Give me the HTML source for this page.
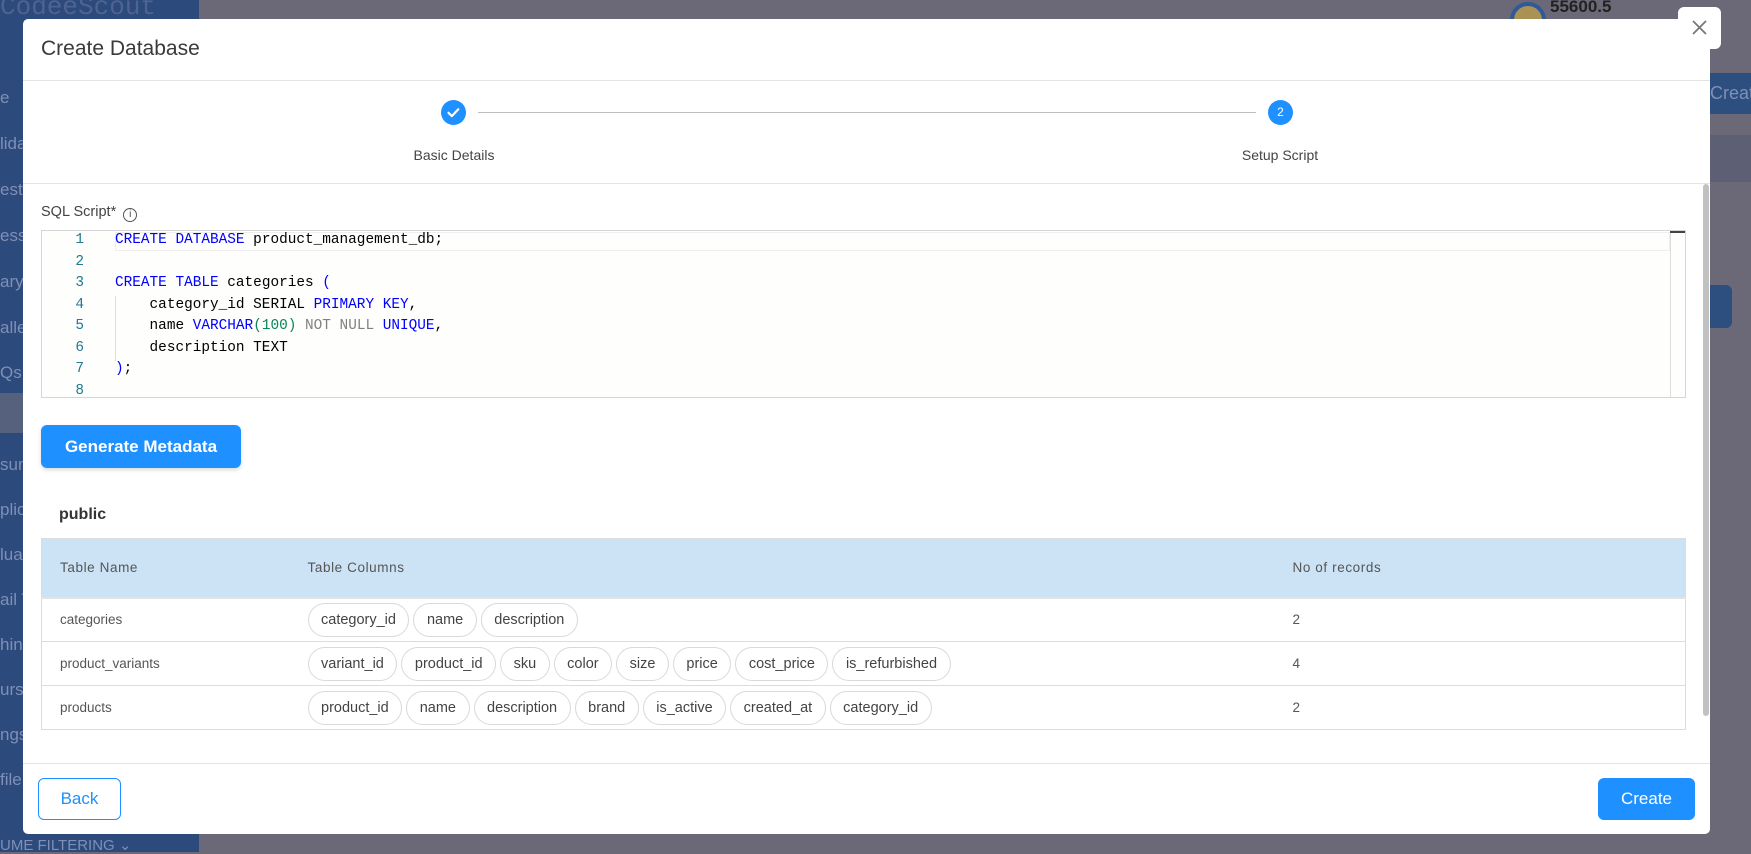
<!DOCTYPE html>
<html><head><meta charset="utf-8"><style>
*{box-sizing:border-box;margin:0;padding:0}
body{width:1751px;height:852px;overflow:hidden;background:#6b6977;font-family:"Liberation Sans",sans-serif;position:relative}
.side{position:absolute;left:0;top:0;width:199px;height:852px;background:#2c4a7b}
.sidetxt{position:absolute;left:0;color:#7f8fb5;font-size:17px}
.abs{position:absolute}
.modal{position:absolute;left:23px;top:19px;width:1687px;height:815px;background:#fff;border-radius:5px;overflow:hidden}
.hdr{position:absolute;left:0;top:0;width:100%;height:62px;border-bottom:1px solid #e3e3e3}
.hdr h1{position:absolute;left:18px;top:18px;font-size:21px;font-weight:normal;color:#3a3a3a}
.step{position:absolute;top:62px;height:103px;width:100%;border-bottom:1px solid #e3e3e3}
.circ{position:absolute;width:25px;height:25px;border-radius:50%;background:#1e90ff;color:#fff;font-size:12px;text-align:center;line-height:25px}
.lbl{position:absolute;font-size:14px;color:#444;transform:translateX(-50%);top:66px}
.code{position:absolute;left:18px;top:211px;width:1645px;height:168px;border:1px solid #d6d6d6;background:#fefefd;font-family:"Liberation Mono",monospace;font-size:14.4px}
.ln{position:absolute;left:0;width:42px;text-align:right;color:#237893}
.cl{position:absolute;left:73px;white-space:pre;color:#000}
.k{color:#0000ff}.n{color:#098658}.g{color:#808080}
.btn{position:absolute;background:#1e90ff;color:#fff;border-radius:6px;text-align:center;font-size:17px}
table{position:absolute;left:18px;top:519px;width:1645px;border-collapse:collapse;border:1px solid #dcdcdc;font-size:13.5px;color:#555}
th{background:#cce3f6;height:59px;text-align:left;font-weight:normal;letter-spacing:.6px;color:#555;border-bottom:2px solid #e3e3e3}
td{border-top:1px solid #dcdcdc;height:44px;vertical-align:middle}
th:first-child,td:first-child{padding-left:18px;width:266px}
th:nth-child(3),td:nth-child(3){width:393px}
.chip{display:inline-block;vertical-align:middle;border:1px solid #d9d9d9;border-radius:17px;height:34px;line-height:32px;padding:0 12.5px;margin-right:4px;font-size:14.5px;color:#444}
</style></head><body>
<div class="side"></div>
<div class="sidetxt" style="top:-8px;left:0;font-size:26px;color:#4d6492;font-family:'Liberation Mono',monospace">CodeeScout</div>
<div class="sidetxt" style="top:88px">e</div>
<div class="sidetxt" style="top:134px">lida</div>
<div class="sidetxt" style="top:180px">est</div>
<div class="sidetxt" style="top:226px">essn</div>
<div class="sidetxt" style="top:272px">ary</div>
<div class="sidetxt" style="top:318px">aller</div>
<div class="sidetxt" style="top:363px">Qs</div>
<div class="abs" style="top:393px;left:0;width:23px;height:40px;background:#56617d"></div>
<div class="sidetxt" style="top:455px">sum</div>
<div class="sidetxt" style="top:500px">plic</div>
<div class="sidetxt" style="top:545px">lua</div>
<div class="sidetxt" style="top:590px">ail T</div>
<div class="sidetxt" style="top:635px">hing</div>
<div class="sidetxt" style="top:680px">urse</div>
<div class="sidetxt" style="top:725px">ngs</div>
<div class="sidetxt" style="top:770px">file</div>
<div class="sidetxt" style="top:836px;font-size:15px">UME FILTERING ⌄</div>
<div class="abs" style="left:1510px;top:2px;width:36px;height:36px;border-radius:50%;border:4px solid #2f5a9a;background:#a99253"></div>
<div class="abs" style="left:1550px;top:-3px;font-size:17px;font-weight:bold;color:#222">55600.5</div>
<div class="abs" style="left:1710px;top:73px;width:41px;height:41px;background:#2d4f80;color:#7f90b5;font-size:18px;line-height:41px">Creat</div>
<div class="abs" style="left:1710px;top:135px;width:41px;height:47px;background:#5d6075"></div>
<div class="abs" style="left:1710px;top:285px;width:22px;height:43px;background:#2d4f80;border-radius:0 6px 6px 0"></div>
<div class="modal">
 <div class="hdr"><h1>Create Database</h1></div>
 <div class="step">
  <div class="circ" style="left:418px;top:19px"><svg width="25" height="25" viewBox="0 0 25 25"><path d="M7.5 12.8l3.3 3.3 6.5-6.8" fill="none" stroke="#fff" stroke-width="2.2" stroke-linecap="round" stroke-linejoin="round"/></svg></div>
  <div class="abs" style="left:455px;top:31px;width:778px;height:1px;background:#bdbdbd"></div>
  <div class="circ" style="left:1245px;top:19px">2</div>
  <div class="lbl" style="left:431px">Basic Details</div>
  <div class="lbl" style="left:1257px">Setup Script</div>
 </div>
 <div class="abs" style="left:1680px;top:165px;width:6px;height:532px;background:#c1c1c1;border-radius:3px"></div>
 <div class="abs" style="left:18px;top:185px;font-size:14.5px;color:#444">SQL Script* <span style="display:inline-block;width:14px;height:14px;border:1.3px solid #555;border-radius:50%;font-size:10px;text-align:center;line-height:12px;vertical-align:-1px;margin-left:3px">i</span></div>
 <div class="code">
  <div class="abs" style="left:73px;top:1px;width:1555px;height:19px;border:1px solid #eee"></div>
  <div class="abs" style="left:1628px;top:0;width:1px;height:166px;background:#ddd"></div>
  <div class="abs" style="left:1628px;top:0;width:15px;height:2px;background:#444"></div>
  <div class="abs" style="left:73px;top:65px;width:1px;height:65px;background:#ddd"></div>
  <div class="ln" style="top:1px">1</div><div class="cl" style="top:1px"><span class="k">CREATE DATABASE</span> product_management_db;</div>
  <div class="ln" style="top:23px">2</div>
  <div class="ln" style="top:44px">3</div><div class="cl" style="top:44px"><span class="k">CREATE TABLE</span> categories <span class="k">(</span></div>
  <div class="ln" style="top:66px">4</div><div class="cl" style="top:66px">    category_id SERIAL <span class="k">PRIMARY KEY</span>,</div>
  <div class="ln" style="top:87px">5</div><div class="cl" style="top:87px">    name <span class="k">VARCHAR</span><span class="n">(100)</span> <span class="g">NOT NULL</span> <span class="k">UNIQUE</span>,</div>
  <div class="ln" style="top:109px">6</div><div class="cl" style="top:109px">    description TEXT</div>
  <div class="ln" style="top:130px">7</div><div class="cl" style="top:130px"><span class="k">)</span>;</div>
  <div class="ln" style="top:152px">8</div>
 </div>
 <div class="btn" style="left:18px;top:406px;width:200px;height:43px;line-height:43px;font-weight:bold;box-shadow:0 2px 4px rgba(0,0,0,.15)">Generate Metadata</div>
 <div class="abs" style="left:36px;top:487px;font-size:16px;font-weight:bold;color:#333">public</div>
 <table>
  <tr><th>Table Name</th><th>Table Columns</th><th>No of records</th></tr>
  <tr><td>categories</td><td><span class="chip">category_id</span><span class="chip">name</span><span class="chip">description</span></td><td>2</td></tr>
  <tr><td>product_variants</td><td><span class="chip">variant_id</span><span class="chip">product_id</span><span class="chip">sku</span><span class="chip">color</span><span class="chip">size</span><span class="chip">price</span><span class="chip">cost_price</span><span class="chip">is_refurbished</span></td><td>4</td></tr>
  <tr><td>products</td><td><span class="chip">product_id</span><span class="chip">name</span><span class="chip">description</span><span class="chip">brand</span><span class="chip">is_active</span><span class="chip">created_at</span><span class="chip">category_id</span></td><td>2</td></tr>
 </table>
 <div class="abs" style="left:0;top:744px;width:100%;height:1px;background:#e3e3e3"></div>
 <div class="abs" style="left:15px;top:759px;width:83px;height:42px;border:1px solid #1e90ff;border-radius:6px;color:#1e90ff;font-size:17px;text-align:center;line-height:40px">Back</div>
 <div class="btn" style="left:1575px;top:759px;width:97px;height:42px;line-height:42px">Create</div>
</div>
<div class="abs" style="left:1678px;top:7px;width:43px;height:42px;background:#fff;border-radius:6px"><svg width="43" height="42" viewBox="0 0 43 42"><path d="M15 14l13 13M28 14L15 27" stroke="#777" stroke-width="1.8"/></svg></div>
</body></html>
